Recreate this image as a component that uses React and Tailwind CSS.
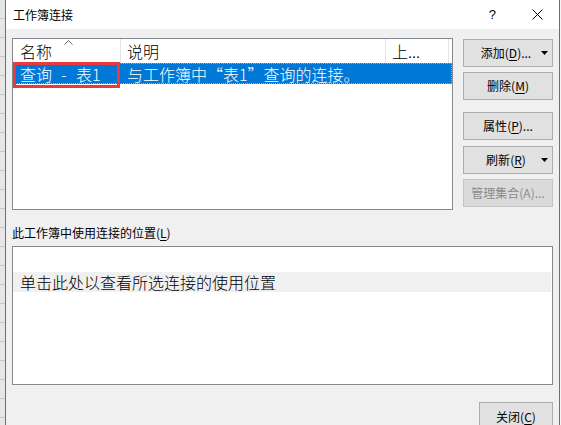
import React from 'react';

const cjk = { fontFamily: '"Noto Sans CJK SC", "Noto Sans", sans-serif' };

const DropArrow = () => (
    <svg width="7" height="4" viewBox="0 0 7 4" className="absolute right-[4px] top-1/2 -translate-y-1/2">
        <path d="M0 0 H7 L3.5 4 Z" fill="#000" />
    </svg>
);

const SideButton = ({ label, hot, rest = '', dropdown, disabled, className = '' }) => (
    <button
        className={`relative h-[28px] w-full border flex items-center justify-center text-[12px] leading-none ${
            disabled
                ? 'border-[#c4c4c4] bg-[#dadada] text-[#8a8a8a]'
                : 'border-[#adadad] bg-[#e1e1e1] text-black'
        } ${dropdown ? 'pr-[4px]' : ''} ${className}`}
        style={cjk}
    >
        <span>
            {label}(<span className={disabled ? '' : 'underline underline-offset-2'}>{hot}</span>){rest}
        </span>
        {dropdown && <DropArrow />}
    </button>
);

export default function App() {
    return (
        <div className="flex w-[561px] h-[425px] overflow-hidden bg-[#f0f0f0]" style={cjk}>
            {/* excel sheet peeking out on the left */}
            <div className="w-[5px] shrink-0 bg-[#e6e6e6] bg-[repeating-linear-gradient(to_bottom,transparent_0px,transparent_18px,#c8c8c8_18px,#c8c8c8_19px)]" />
            <div className="w-[1px] shrink-0 bg-[#6e6e6e]" />

            {/* dialog */}
            <div className="flex-1 flex flex-col min-w-0">
                <div className="h-[29px] shrink-0 bg-white flex items-center pl-[7px]">
                    <span className="text-[12px] text-black">工作簿连接</span>
                    <span className="ml-auto text-[13px] text-black mr-[36px]" style={{ fontFamily: '"Liberation Sans", sans-serif' }}>?</span>
                    <svg width="11" height="11" viewBox="0 0 11 11" className="mr-[16px]">
                        <path d="M0.5 0.5 L10.5 10.5 M10.5 0.5 L0.5 10.5" stroke="#000" strokeWidth="1" />
                    </svg>
                </div>

                <div className="flex-1 px-[6px] pt-[9px]">
                    <div className="flex">
                        {/* connections list */}
                        <div className="relative w-[441px] h-[172px] border border-[#828790] bg-white font-light">
                            <div className="flex h-[24px] text-[16px] leading-none text-black">
                                <div className="relative w-[108px] border-r border-[#e5e5e5] flex items-center pl-[7px]">
                                    名称
                                    <svg width="9" height="5" viewBox="0 0 9 5" className="absolute left-[51px] top-[1px]">
                                        <path d="M0.5 4.5 L4.5 0.5 L8.5 4.5" fill="none" stroke="#666" strokeWidth="1" />
                                    </svg>
                                </div>
                                <div className="w-[265px] border-r border-[#e5e5e5] flex items-center pl-[6px]">说明</div>
                                <div className="w-[63px] border-r border-[#e5e5e5] flex items-center pl-[6px]">上...</div>
                            </div>
                            <div className="flex h-[21px] bg-[#0078d7] text-white text-[16px] leading-none outline-1 outline-dotted outline-[#e8a040] -outline-offset-1">
                                <div className="w-[108px] flex items-center pl-[7px] whitespace-nowrap">
                                    <span>查询</span>
                                    <span className="ml-[8px] w-[8px] text-center">-</span>
                                    <span className="ml-[8px]">表1</span>
                                </div>
                                <div className="flex items-center pl-[6px] whitespace-nowrap">与工作簿中“表1”查询的连接。</div>
                            </div>
                            {/* red annotation box */}
                            <div className="absolute left-0 top-[23px] w-[107px] h-[26px] border-[3px] border-[#e8393d]" />
                        </div>

                        {/* buttons */}
                        <div className="ml-[10px] w-[90px] pt-[1px] flex flex-col">
                            <SideButton label="添加" hot="D" rest="..." dropdown />
                            <SideButton label="删除" hot="M" className="mt-[5px]" />
                            <SideButton label="属性" hot="P" rest="..." className="mt-[12px]" />
                            <SideButton label="刷新" hot="R" dropdown className="mt-[6px]" />
                            <SideButton label="管理集合" hot="A" rest="..." disabled className="mt-[5px]" />
                        </div>
                    </div>

                    <div className="mt-[15px] h-[16px] text-[12px] leading-[16px] text-black">
                        此工作簿中使用连接的位置(<span className="underline underline-offset-2">L</span>)
                    </div>

                    <div className="mt-[5px] h-[139px] border border-[#828790] bg-white pt-[25px] pr-[1px] font-light">
                        <div className="h-[20px] bg-[#f0f0f0] flex items-center pl-[7px] text-[16px] leading-none text-black">
                            单击此处以查看所选连接的使用位置
                        </div>
                    </div>

                    <div className="flex justify-end mt-[17px]">
                        <button className="w-[74px] h-[29px] border border-[#adadad] bg-[#e1e1e1] text-[12px] text-black" style={cjk}>
                            关闭(<span className="underline underline-offset-2">C</span>)
                        </button>
                    </div>
                </div>
            </div>

            <div className="w-[1px] shrink-0 bg-[#6e6e6e]" />
            <div className="w-[1px] shrink-0 bg-[#f5f5f5]" />
        </div>
    );
}
